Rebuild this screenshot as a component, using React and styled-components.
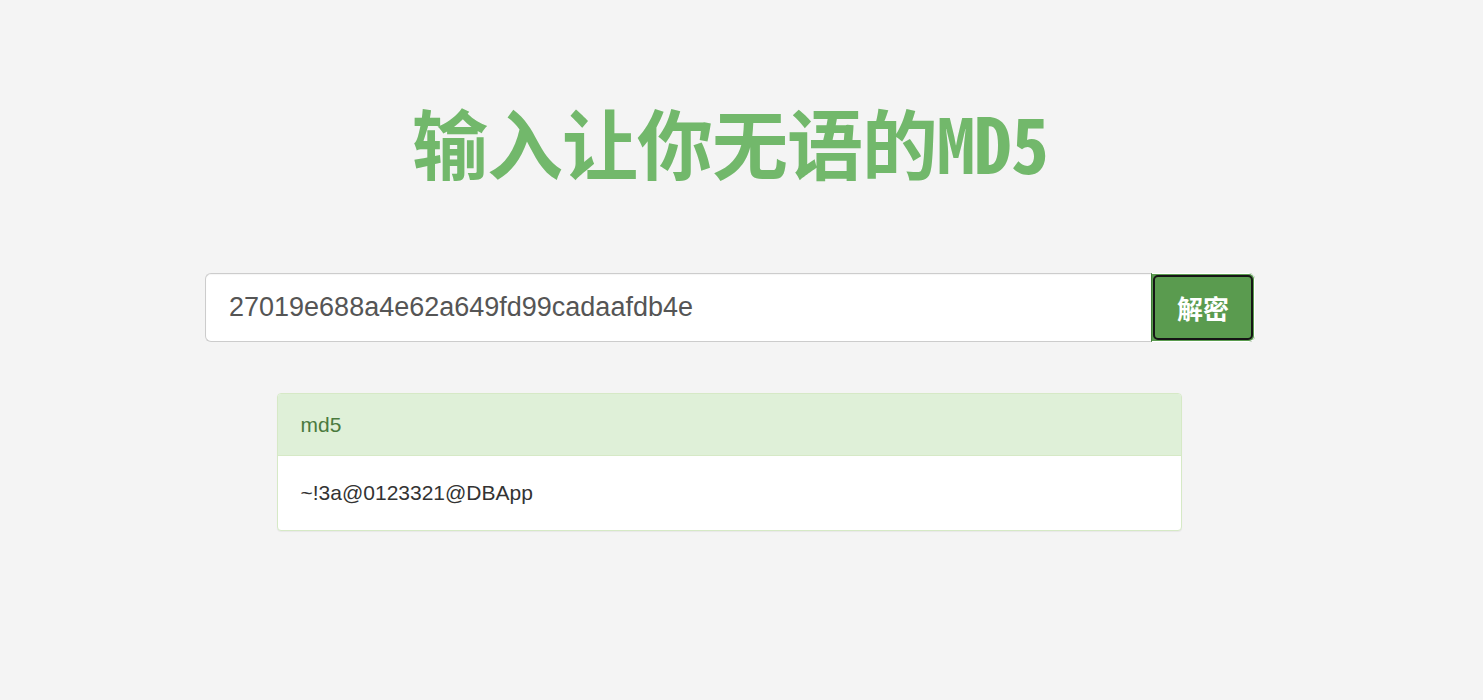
import React from "react";
import styled, { createGlobalStyle } from "styled-components";

const GlobalStyle = createGlobalStyle`
  html, body {
    margin: 0;
    padding: 0;
    background: #f4f4f4;
  }
  body {
    font-family: "Liberation Sans", Arial, sans-serif;
    color: #333;
  }
`;

const Page = styled.div`
  min-height: 700px;
  box-sizing: border-box;
  padding: 99px 23px 0 0;
  display: flex;
  flex-direction: column;
  align-items: center;
`;

const Title = styled.h1`
  margin: 0;
  font-family: "Noto Sans Mono CJK SC", "Noto Sans CJK SC", monospace;
  font-weight: 700;
  font-size: 76px;
  line-height: 84px;
  color: #72b86b;
  letter-spacing: -1px;
  white-space: nowrap;
`;

const SearchForm = styled.form`
  margin-top: 90px;
  width: 1050px;
  height: 69px;
  display: flex;
`;

const HashInput = styled.input`
  flex: 1;
  min-width: 0;
  height: 100%;
  box-sizing: border-box;
  border: 1px solid #ccc;
  border-right: none;
  border-radius: 6px 0 0 6px;
  background: #fff;
  padding: 0 23px;
  font-family: "Liberation Sans", Arial, sans-serif;
  font-size: 27px;
  color: #555;
  outline: none;
  box-shadow: inset 0 1px 1px rgba(0, 0, 0, 0.04);
`;

const DecryptButton = styled.button`
  position: relative;
  width: 104px;
  height: 100%;
  box-sizing: border-box;
  border: 1px solid #3f7a37;
  border-radius: 0 6px 6px 0;
  background: #5a9b4f;
  color: #fff;
  font-family: "Noto Sans CJK SC", sans-serif;
  font-weight: 700;
  font-size: 26px;
  cursor: pointer;
  padding: 0;

  &::before {
    content: "";
    position: absolute;
    inset: -1px -1px -1px 0;
    border: 1px solid #fff;
    border-left: none;
    border-radius: 0 6px 6px 0;
    pointer-events: none;
  }

  &::after {
    content: "";
    position: absolute;
    inset: 1px;
    border: 2.5px solid #151515;
    border-radius: 5px;
    pointer-events: none;
  }
`;

const ResultPanel = styled.section`
  margin-top: 51px;
  margin-left: -2px;
  width: 905px;
  box-sizing: border-box;
  background: #fff;
  border: 1px solid #d6e9c6;
  border-radius: 4px;
  overflow: hidden;
  box-shadow: 0 1px 1px rgba(0, 0, 0, 0.05);
`;

const PanelHeading = styled.div`
  height: 61px;
  display: flex;
  align-items: center;
  padding: 0 23px;
  background: #dff0d8;
  border-bottom: 1px solid #d6e9c6;
  color: #4a7a3e;
  font-size: 21px;
`;

const PanelBody = styled.div`
  height: 74px;
  display: flex;
  align-items: center;
  padding: 0 23px;
  color: #333;
  font-size: 21px;
`;

export default function App() {
  return (
    <>
      <GlobalStyle />
      <Page>
        <Title>输入让你无语的MD5</Title>
        <SearchForm onSubmit={(e) => e.preventDefault()}>
          <HashInput defaultValue="27019e688a4e62a649fd99cadaafdb4e" />
          <DecryptButton type="submit">解密</DecryptButton>
        </SearchForm>
        <ResultPanel>
          <PanelHeading>md5</PanelHeading>
          <PanelBody>~!3a@0123321@DBApp</PanelBody>
        </ResultPanel>
      </Page>
    </>
  );
}
